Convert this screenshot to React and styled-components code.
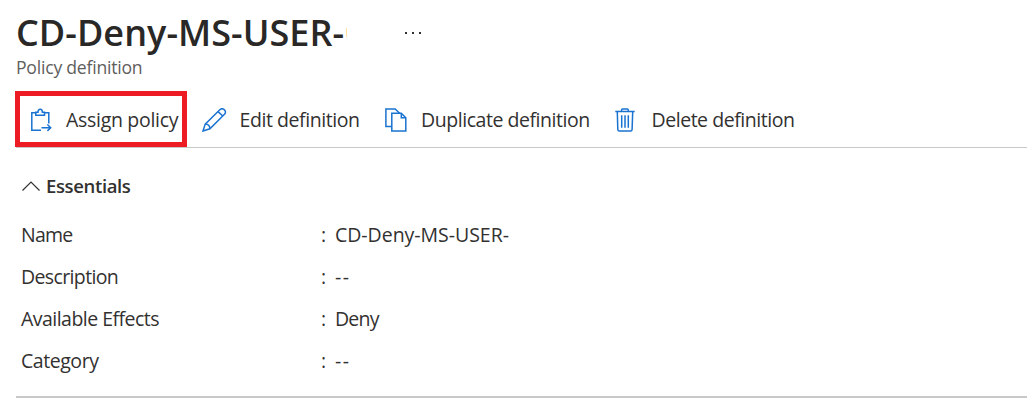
import React from "react";
import styled, { createGlobalStyle } from "styled-components";

const GlobalStyle = createGlobalStyle`
  body {
    margin: 0;
    background: #fff;
    color: #323130;
    font-family: "Segoe UI", "Open Sans", "Noto Sans", sans-serif;
    overflow: hidden;
  }
`;

const Page = styled.main`
  box-sizing: border-box;
  width: 1027px;
  height: 410px;
  padding-left: 15px;
  display: flex;
  flex-direction: column;
`;

const Label = styled.span`
  display: block;
  white-space: nowrap;
  letter-spacing: ${(p) => p.$track || 0}px;
`;

const Header = styled.header`
  height: 91px;
  padding-left: 1px;
  box-sizing: border-box;
`;

const TitleRow = styled.div`
  display: flex;
  height: 55px;
  padding-top: 9px;
  box-sizing: border-box;
`;

const Title = styled.h1`
  margin: 0;
  width: 330px;
  font-size: 36px;
  line-height: 48px;
  font-weight: 600;
  color: #292827;
  white-space: nowrap;
  letter-spacing: 0.05px;
`;

const Sliver = styled.span`
  width: 1px;
  height: 9px;
  margin-top: 19px;
  background: #ffdf9e;
`;

const More = styled.svg`
  margin: 21px 0 0 57px;
`;

const Subtitle = styled(Label)`
  font-size: 17.6px;
  line-height: 24px;
  color: #605e5c;
`;

const Toolbar = styled.nav`
  display: flex;
  height: 57px;
  margin-left: 1px;
  box-sizing: border-box;
  border-bottom: 1px solid #c8c8c8;
`;

const Command = styled.button`
  display: flex;
  align-items: center;
  box-sizing: border-box;
  height: 56px;
  width: ${(p) => p.$width}px;
  margin: 0;
  padding: 2px 0 0 ${(p) => p.$lead || 0}px;
  gap: ${(p) => p.$gap}px;
  border: 0;
  background: none;
  color: #323130;
  font-family: inherit;
  font-size: 19.5px;
  line-height: 28px;
`;

const Highlighted = styled(Command)`
  margin-left: -1px;
  border: 5px solid #ed1c24;
`;

const Icon = styled.svg`
  flex: none;
  fill: none;
  stroke: #1a73d0;
  stroke-width: 1.5;
`;

const EssentialsToggle = styled.div`
  display: flex;
  align-items: center;
  height: 28px;
  margin: 24px 0 0 7px;
  gap: 6px;
  font-size: 18.5px;
  line-height: 28px;
  font-weight: 600;
`;

const Properties = styled.dl`
  margin: 14px 0 0 6px;
  height: 182px;
`;

const Property = styled.div`
  display: grid;
  grid-template-columns: 300px 14px 1fr;
  height: 42px;
  align-items: center;
  font-size: 19.5px;
  line-height: 28px;
`;

const Term = styled.dt`
  margin: 0;
`;

const Value = styled.dd`
  margin: 0;
`;

const Divider = styled.hr`
  width: 1011px;
  height: 2px;
  margin: 0 0 0 1px;
  border: 0;
  background: #c8c8c8;
`;

const AssignIcon = () => (
  <Icon width="22" height="24" viewBox="0 0 22 24">
    <path d="M11 22.2H1.8V4.7H5.8M14.5 4.7H18.8V15.5" />
    <path d="M5.8 7.3V4.2H8C8 2.3 8.9 1.2 10.2 1.2S12.4 2.3 12.4 4.2H14.5V7.3Z" />
    <path d="M11.5 19.7H20.5M17.4 16.5L20.7 19.7L17.4 22.9" />
  </Icon>
);

const EditIcon = () => (
  <Icon width="25" height="24" viewBox="0 0 25 24">
    <path d="M1 23L3.2 16.1L17.8 1.8C19 .6 20.8.4 22.2 1.6C23.8 3 23.8 5 22.5 6.3L7.9 20.8Z" />
    <path d="M3.2 16.1C5.9 16.2 7.8 18.1 7.9 20.8M16 3.6L20.8 8" />
  </Icon>
);

const DuplicateIcon = () => (
  <Icon width="22" height="24" viewBox="0 0 22 24">
    <path d="M6.8 18.5H.9V.9H10.2L14.6 5.2" />
    <path d="M6.8 5.2H16.3L20.8 9.7V23H6.8ZM16.3 5.2V9.7H20.8" />
  </Icon>
);

const DeleteIcon = () => (
  <Icon width="20" height="24" viewBox="0 0 20 24">
    <path d="M.3 3.6H19.7M6.6 3.5V1.8Q6.6.9 7.5.9H12.3Q13.2.9 13.2 1.8V3.5M2.3 3.8L2.8 21.5Q2.9 23 4.3 23H15.6Q17 23 17.1 21.5L17.7 3.8" />
    <path d="M6.7 7.3V19.7M10 7.3V19.7M13.3 7.3V19.7" />
  </Icon>
);

const properties = [
  { name: "Name", value: "CD-Deny-MS-USER-", nameTrack: -0.8, valueTrack: -0.03 },
  { name: "Description", value: "--", nameTrack: -0.63, valueTrack: 1.6 },
  { name: "Available Effects", value: "Deny", nameTrack: -0.53, valueTrack: -0.8 },
  { name: "Category", value: "--", nameTrack: -0.45, valueTrack: 1.6 },
];

export default function App() {
  return (
    <>
      <GlobalStyle />
      <Page>
        <Header>
          <TitleRow>
            <Title>CD-Deny-MS-USER-</Title>
            <Sliver />
            <More width="20" height="6" viewBox="0 0 20 6" fill="#323130">
              <path d="M1 2h2v2H1zM8 2h2v2H8zM15 2h2v2h-2z" />
            </More>
          </TitleRow>
          <Subtitle $track={-0.22}>Policy definition</Subtitle>
        </Header>
        <Toolbar>
          <Highlighted $width={172} $lead={10} $gap={14}>
            <AssignIcon />
            <Label $track={-0.3}>Assign policy</Label>
          </Highlighted>
          <Command $width={183} $lead={15} $gap={12.5}>
            <EditIcon />
            <Label $track={-0.43}>Edit definition</Label>
          </Command>
          <Command $width={230} $lead={15} $gap={14}>
            <DuplicateIcon />
            <Label $track={-0.45}>Duplicate definition</Label>
          </Command>
          <Command $width={200} $lead={15} $gap={16.5}>
            <DeleteIcon />
            <Label $track={-0.46}>Delete definition</Label>
          </Command>
        </Toolbar>
        <EssentialsToggle>
          <svg width="18" height="12" viewBox="0 0 18 12" fill="none" stroke="#323130" strokeWidth="1.2">
            <path d="M.5 10.5L9 2L17.5 10.5" />
          </svg>
          <Label $track={-0.36}>Essentials</Label>
        </EssentialsToggle>
        <Properties>
          {properties.map((p) => (
            <Property key={p.name}>
              <Term><Label $track={p.nameTrack}>{p.name}</Label></Term>
              <span>:</span>
              <Value><Label $track={p.valueTrack}>{p.value}</Label></Value>
            </Property>
          ))}
        </Properties>
        <Divider />
      </Page>
    </>
  );
}
